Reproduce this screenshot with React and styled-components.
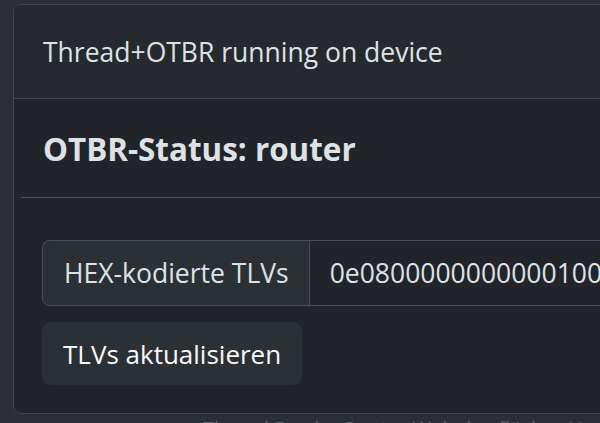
import styled, { createGlobalStyle } from 'styled-components'

const GlobalStyle = createGlobalStyle`
  html, body {
    margin: 0;
    padding: 0;
    background: #2b2f34;
    overflow: hidden;
    font-family: "Open Sans", "Noto Sans", "Liberation Sans", sans-serif;
    color: #dee2e6;
  }
`

function App() {
    return (
        <>
            <GlobalStyle />
            <Page>
                <Card>
                    <CardHeader>Thread+OTBR running on device</CardHeader>
                    <CardBody>
                        <Title>OTBR-Status: router</Title>
                        <Divider />
                        <Content>
                            <InputGroup>
                                <GroupLabel>HEX-kodierte TLVs</GroupLabel>
                                <GroupInput readOnly value='0e080000000000010000000300000f35060004001fffe0020811111111222222220708fd' />
                            </InputGroup>
                            <Button>TLVs aktualisieren</Button>
                        </Content>
                    </CardBody>
                </Card>
                <Footer>Thread Border Router Weboberfläche · Version 1.4.2</Footer>
            </Page>
        </>
    )
}

const Page = styled.div`
   padding: 4px 0 0 13px;
   width: 700px;
`

const Card = styled.section`
   width: 660px;
   background: #212529;
   border: 1px solid #41464c;
   border-radius: 8px;
   overflow: hidden;
`

const CardHeader = styled.div`
   height: 93px;
   display: flex;
   align-items: center;
   padding: 0 29px;
   background: #26292e;
   border-bottom: 1px solid #41464c;
   font-size: 26.5px;
   color: #dee2e6;
`

const CardBody = styled.div`
   padding: 0 0 28px 7px;
`

const Title = styled.h4`
   margin: 0;
   height: 98px;
   display: flex;
   align-items: center;
   padding: 0 22px;
   font-size: 31.4px;
   font-weight: 700;
   color: #dee2e6;
`

const Divider = styled.hr`
   margin: 0;
   border: none;
   border-top: 1px solid #4a4f55;
`

const Content = styled.div`
   padding: 42px 22px 0 21px;
   display: flex;
   flex-direction: column;
   gap: 16px;
`

const InputGroup = styled.div`
   display: flex;
   height: 64px;
   border: 1px solid #4a4f55;
   border-radius: 8px 0 0 8px;
   border-right: none;
   overflow: hidden;
`

const GroupLabel = styled.span`
   display: flex;
   align-items: center;
   padding: 0 20px 0 21px;
   background: #2b3035;
   border-right: 1px solid #4a4f55;
   white-space: nowrap;
   font-size: 26.5px;
   color: #dee2e6;
`

const GroupInput = styled.input`
   flex: 1;
   min-width: 0;
   background: #212529;
   border: none;
   outline: none;
   padding: 0 20px;
   font-family: inherit;
   font-size: 26.5px;
   color: #dee2e6;
`

const Button = styled.button`
   align-self: flex-start;
   height: 63px;
   padding: 0 20px;
   background: #2b3035;
   border: 1px solid #2b3035;
   border-radius: 8px;
   font-family: inherit;
   font-size: 26px;
   color: #f8f9fa;
   cursor: pointer;
`

const Footer = styled.div`
   padding: 5px 0 0 190px;
   font-size: 20px;
   line-height: 1;
   color: #5c636a;
   white-space: nowrap;
`

export default App
